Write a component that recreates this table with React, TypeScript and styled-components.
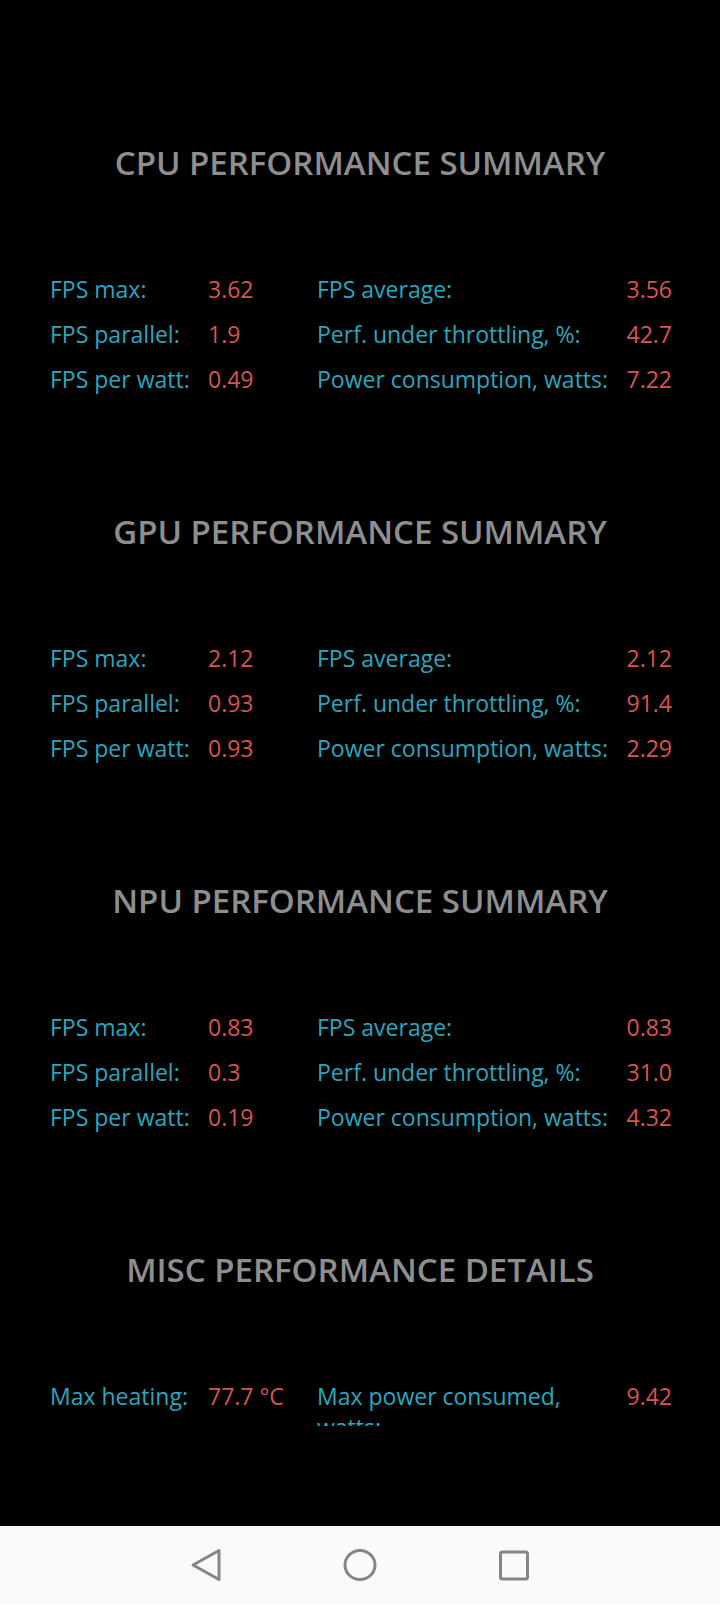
import React from "react";
import styled, { createGlobalStyle } from "styled-components";

type Stat = { label: string; value: string };
type Section = { title: string; rows: [Stat, Stat][] };

const sections: Section[] = [
  {
    title: "CPU PERFORMANCE SUMMARY",
    rows: [
      [
        { label: "FPS max:", value: "3.62" },
        { label: "FPS average:", value: "3.56" },
      ],
      [
        { label: "FPS parallel:", value: "1.9" },
        { label: "Perf. under throttling, %:", value: "42.7" },
      ],
      [
        { label: "FPS per watt:", value: "0.49" },
        { label: "Power consumption, watts:", value: "7.22" },
      ],
    ],
  },
  {
    title: "GPU PERFORMANCE SUMMARY",
    rows: [
      [
        { label: "FPS max:", value: "2.12" },
        { label: "FPS average:", value: "2.12" },
      ],
      [
        { label: "FPS parallel:", value: "0.93" },
        { label: "Perf. under throttling, %:", value: "91.4" },
      ],
      [
        { label: "FPS per watt:", value: "0.93" },
        { label: "Power consumption, watts:", value: "2.29" },
      ],
    ],
  },
  {
    title: "NPU PERFORMANCE SUMMARY",
    rows: [
      [
        { label: "FPS max:", value: "0.83" },
        { label: "FPS average:", value: "0.83" },
      ],
      [
        { label: "FPS parallel:", value: "0.3" },
        { label: "Perf. under throttling, %:", value: "31.0" },
      ],
      [
        { label: "FPS per watt:", value: "0.19" },
        { label: "Power consumption, watts:", value: "4.32" },
      ],
    ],
  },
  {
    title: "MISC PERFORMANCE DETAILS",
    rows: [
      [
        { label: "Max heating:", value: "77.7 °C" },
        { label: "Max power consumed, watts:", value: "9.42" },
      ],
    ],
  },
];

export default function App() {
  return (
    <>
      <GlobalStyle />
      <Screen>
        <Content>
          {sections.map((section) => (
            <SectionBlock key={section.title}>
              <Title>{section.title}</Title>
              <StatGrid>
                {section.rows.map(([left, right]) => (
                  <React.Fragment key={left.label}>
                    <Label>{left.label}</Label>
                    <Value>{left.value}</Value>
                    <Label>{right.label}</Label>
                    <Value $alignEnd>{right.value}</Value>
                  </React.Fragment>
                ))}
              </StatGrid>
            </SectionBlock>
          ))}
        </Content>
        <NavBar>
          <NavButton aria-label="Back">
            <svg width="36" height="36" viewBox="0 0 36 36" fill="none">
              <path
                d="M31 3.5 L5 18 L31 32.5 Z"
                stroke="#858585"
                strokeWidth="3"
                strokeLinejoin="round"
              />
            </svg>
          </NavButton>
          <NavButton aria-label="Home">
            <svg width="36" height="36" viewBox="0 0 36 36" fill="none">
              <ellipse
                cx="18"
                cy="18"
                rx="15"
                ry="14.5"
                stroke="#858585"
                strokeWidth="3"
              />
            </svg>
          </NavButton>
          <NavButton aria-label="Recents">
            <svg width="36" height="36" viewBox="0 0 36 36" fill="none">
              <rect
                x="4.5"
                y="5"
                width="27"
                height="27"
                rx="2"
                stroke="#858585"
                strokeWidth="3"
              />
            </svg>
          </NavButton>
        </NavBar>
      </Screen>
    </>
  );
}

const GlobalStyle = createGlobalStyle`
  html, body {
    margin: 0;
    padding: 0;
    background: #000;
  }
  body {
    font-family: "Open Sans", "Noto Sans", "DejaVu Sans", sans-serif;
  }
`;

const Screen = styled.div`
  min-height: 100vh;
  display: flex;
  flex-direction: column;
  background: #000;
`;

const Content = styled.main`
  flex: 1;
  display: flex;
  flex-direction: column;
  gap: 101px;
  padding-top: 141px;
`;

const SectionBlock = styled.section`
  display: flex;
  flex-direction: column;
`;

const Title = styled.h2`
  margin: 0 0 89px;
  text-align: center;
  font-size: 33px;
  line-height: 44px;
  font-weight: 600;
  color: #8e8e8e;
`;

const StatGrid = styled.div`
  display: grid;
  grid-template-columns: 158px 109px 300px 1fr;
  grid-auto-rows: 45px;
  padding: 0 48px 0 50px;
`;

const Label = styled.div`
  overflow: hidden;
  font-size: 23px;
  line-height: 31px;
  color: #2aa7bf;
`;

const Value = styled.div<{ $alignEnd?: boolean }>`
  overflow: hidden;
  white-space: nowrap;
  font-size: 23px;
  line-height: 31px;
  color: #d8544f;
  text-align: ${({ $alignEnd }) => ($alignEnd ? "right" : "left")};
`;

const NavBar = styled.nav`
  height: 78px;
  flex-shrink: 0;
  display: flex;
  align-items: center;
  justify-content: center;
  gap: 118px;
  background: #fafafa;
`;

const NavButton = styled.div`
  width: 36px;
  height: 36px;
  display: flex;
  align-items: center;
  justify-content: center;
`;
